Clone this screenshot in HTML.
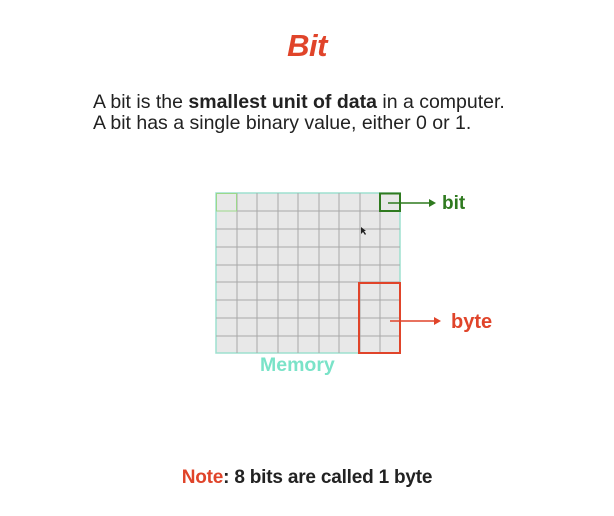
<!DOCTYPE html>
<html><head><style>
body{margin:0;width:614px;height:516px;background:#fff;font-family:"Liberation Sans",sans-serif;position:relative;overflow:hidden}
.t{position:absolute;white-space:nowrap}
</style></head><body>
<div class="t" style="left:0;width:614px;text-align:center;top:28px;font-size:31px;font-weight:bold;font-style:italic;color:#e0442a;letter-spacing:-0.5px">Bit</div>
<div class="t" style="left:93px;top:92px;font-size:19.5px;color:#222;line-height:21px;letter-spacing:0px">A bit is the <b>smallest unit of data</b> in a computer.<br>A bit has a single binary value, either 0 or 1.</div>
<svg style="position:absolute;left:0;top:0" width="614" height="516">
<rect x="216" y="193" width="184" height="160" fill="#e8e8e8" stroke="#9ee0cf" stroke-width="1.5"/>
<g stroke="#a8a8a8" stroke-width="1">
<line x1="237" y1="193" x2="237" y2="353"/><line x1="257" y1="193" x2="257" y2="353"/><line x1="278" y1="193" x2="278" y2="353"/><line x1="298" y1="193" x2="298" y2="353"/><line x1="319" y1="193" x2="319" y2="353"/><line x1="339" y1="193" x2="339" y2="353"/><line x1="360" y1="193" x2="360" y2="353"/><line x1="380" y1="193" x2="380" y2="353"/>
<line x1="216" y1="211" x2="400" y2="211"/><line x1="216" y1="229" x2="400" y2="229"/><line x1="216" y1="247" x2="400" y2="247"/><line x1="216" y1="265" x2="400" y2="265"/><line x1="216" y1="282" x2="400" y2="282"/><line x1="216" y1="300" x2="400" y2="300"/><line x1="216" y1="318" x2="400" y2="318"/><line x1="216" y1="336" x2="400" y2="336"/>
</g>
<rect x="216.5" y="193.5" width="20" height="17.5" fill="none" stroke="#9bd88a" stroke-width="1"/>
<rect x="380" y="193.5" width="20" height="17.5" fill="none" stroke="#2f7a1f" stroke-width="2"/>
<line x1="388" y1="203" x2="430" y2="203" stroke="#2f7a1f" stroke-width="1.5"/>
<path d="M429 199 L436 203 L429 207 Z" fill="#2f7a1f"/>
<rect x="359" y="283" width="41" height="70" fill="none" stroke="#e0442a" stroke-width="2"/>
<line x1="390" y1="321" x2="435" y2="321" stroke="#e0442a" stroke-width="1.5"/>
<path d="M434 317 L441 321 L434 325 Z" fill="#e0442a"/>
<path d="M361 227 L361 234 L363 232 L365 235 L366 234 L364 231 L366 231 Z" fill="#222"/>
</svg>
<div class="t" style="left:442px;top:193px;font-size:19px;font-weight:bold;color:#2f7a1f">bit</div>
<div class="t" style="left:451px;top:311px;font-size:20px;font-weight:bold;color:#e0442a">byte</div>
<div class="t" style="left:260px;top:354px;font-size:19.5px;font-weight:bold;color:#7ae3c8">Memory</div>
<div class="t" style="left:0;width:614px;text-align:center;top:467px;font-size:19px;font-weight:bold;color:#222;letter-spacing:-0.2px"><span style="color:#e0442a">Note</span>: 8 bits are called 1 byte</div>
</body></html>
